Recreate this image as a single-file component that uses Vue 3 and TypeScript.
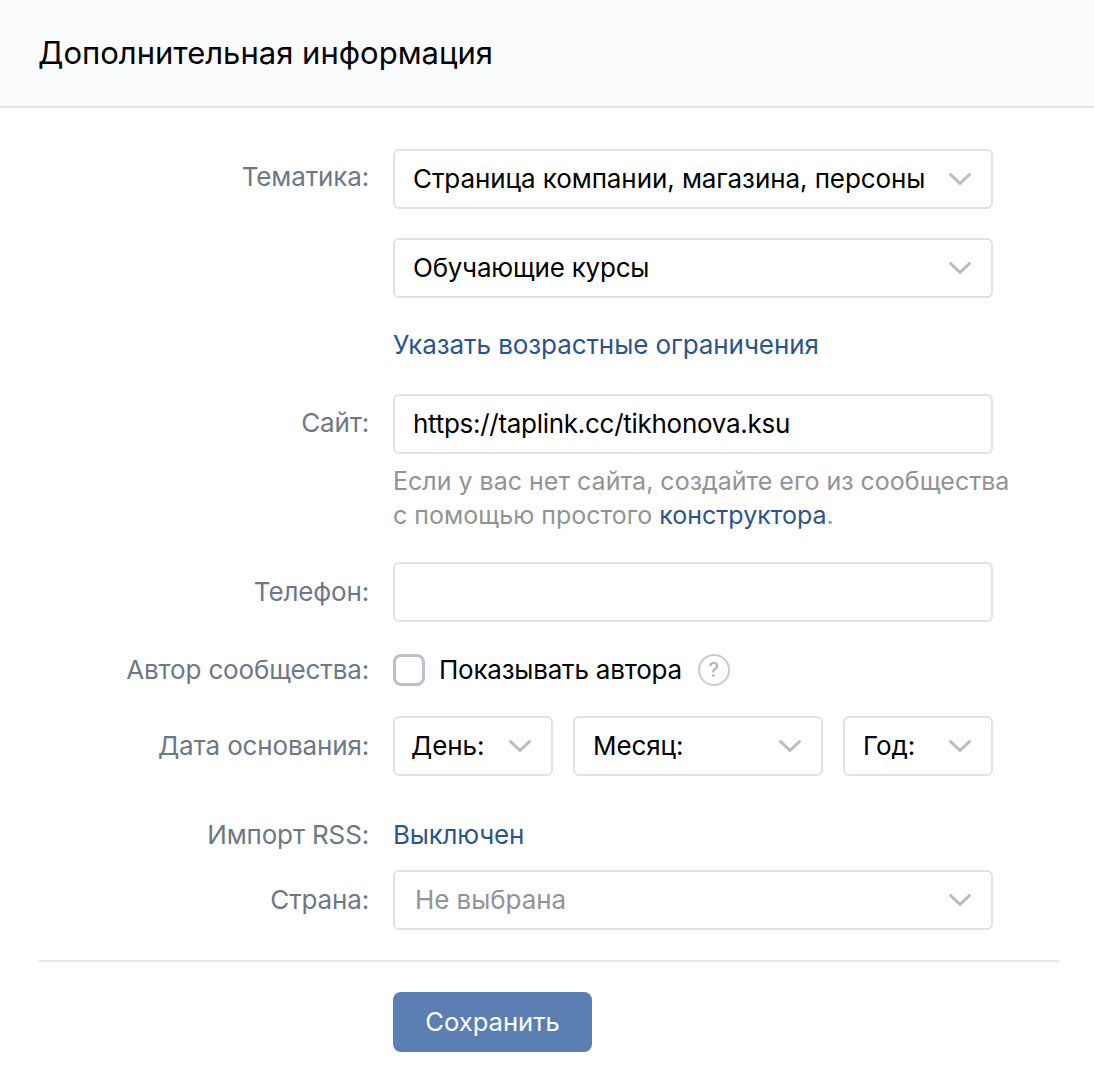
<template>
  <div class="page">
    <div class="header">Дополнительная информация</div>

    <form class="form" @submit.prevent>
      <div class="row row-topic">
        <div class="label">Тематика:</div>
        <div class="field stack">
          <div class="select"><span>Страница компании, магазина, персоны</span><svg class="chev" viewBox="0 0 22 12"><path d="M1.5 1.5L11 10.5l9.5-9" /></svg></div>
          <div class="select"><span class="tight">Обучающие курсы</span><svg class="chev" viewBox="0 0 22 12"><path d="M1.5 1.5L11 10.5l9.5-9" /></svg></div>
        </div>
      </div>

      <div class="row row-age">
        <div class="label"></div>
        <a class="link">Указать возрастные ограничения</a>
      </div>

      <div class="row row-site">
        <div class="label">Сайт:</div>
        <div class="field">
          <div class="select url">https://taplink.cc/tikhonova.ksu</div>
          <p class="hint">Если у вас нет сайта, создайте его из сообщества<br />с помощью простого <a class="link">конструктора</a>.</p>
        </div>
      </div>

      <div class="row row-phone">
        <div class="label">Телефон:</div>
        <div class="select field"></div>
      </div>

      <div class="row row-author">
        <div class="label">Автор сообщества:</div>
        <div class="check-wrap">
          <span class="checkbox"></span>
          <span class="tight">Показывать автора</span>
          <span class="help">?</span>
        </div>
      </div>

      <div class="row row-date">
        <div class="label">Дата основания:</div>
        <div class="date">
          <div v-for="d in dateParts" :key="d.text" class="select" :class="d.cls"><span>{{ d.text }}</span><svg class="chev" viewBox="0 0 22 12"><path d="M1.5 1.5L11 10.5l9.5-9" /></svg></div>
        </div>
      </div>

      <div class="row row-rss">
        <div class="label">Импорт RSS:</div>
        <a class="link tight">Выключен</a>
      </div>

      <div class="row row-country">
        <div class="label">Страна:</div>
        <div class="select field placeholder"><span>Не выбрана</span><svg class="chev" viewBox="0 0 22 12"><path d="M1.5 1.5L11 10.5l9.5-9" /></svg></div>
      </div>

      <div class="divider"></div>

      <div class="row">
        <div class="label"></div>
        <button class="save" type="button">Сохранить</button>
      </div>
    </form>
  </div>
</template>

<script setup lang="ts">
const dateParts = [
  { text: 'День:', cls: 'day' },
  { text: 'Месяц:', cls: 'month' },
  { text: 'Год:', cls: 'year' }
]
</script>

<style>
html, body {
  background: #fff;
}
</style>

<style scoped>
.page {
  width: 1094px;
  height: 1090px;
  font-family: Inter, "Noto Sans", sans-serif;
  font-size: 26px;
  letter-spacing: -0.08px;
  line-height: 34px;
  color: #000;
  background: #fff;
  overflow: hidden;
}

.header {
  height: 106px;
  padding: 0 38px;
  display: flex;
  align-items: center;
  font-size: 31px;
  letter-spacing: 0;
  background: #fafbfc;
  border-bottom: 2px solid #e1e3e6;
}

.form {
  padding-top: 41px;
}

.row {
  display: flex;
  align-items: center;
}

.row-topic {
  align-items: flex-start;
}

.row-topic .label {
  height: 60px;
  line-height: 56px;
}

.row-age {
  margin-top: 30px;
}

.row-site {
  margin-top: 32px;
  align-items: flex-start;
}

.row-site .label {
  height: 60px;
  line-height: 58px;
}

.row-phone {
  margin-top: 30px;
}

.row-author {
  margin-top: 31px;
}

.row-date {
  margin-top: 29px;
}

.row-rss {
  margin-top: 42px;
}

.row-country {
  margin-top: 18px;
}

.label {
  width: 369px;
  flex: none;
  margin-right: 24px;
  text-align: right;
  color: #6d7885;
  letter-spacing: -0.15px;
}

.field {
  width: 600px;
}

.stack {
  display: flex;
  flex-direction: column;
  gap: 29px;
}

.select {
  box-sizing: border-box;
  height: 60px;
  display: flex;
  align-items: center;
  justify-content: space-between;
  padding: 0 20px 0 18px;
  border: 2px solid #dfe2e7;
  border-radius: 6px;
  background: #fff;
}

.tight {
  letter-spacing: -0.22px;
}

.url {
  letter-spacing: -0.28px;
}

.chev {
  width: 22px;
  height: 12px;
  flex: none;
}

.chev path {
  fill: none;
  stroke: #b8bcc4;
  stroke-width: 3;
  stroke-linecap: round;
  stroke-linejoin: round;
}

.link {
  color: #2c5587;
  text-decoration: none;
}

.hint {
  margin: 10px 0 0;
  color: #939393;
  font-size: 25px;
  letter-spacing: 0;
  white-space: nowrap;
}

.check-wrap {
  display: flex;
  align-items: center;
}

.checkbox {
  box-sizing: border-box;
  width: 32px;
  height: 32px;
  margin-right: 14px;
  border: 3px solid #b8c1cc;
  border-radius: 8px;
}

.help {
  box-sizing: border-box;
  width: 32px;
  height: 32px;
  margin-left: 16px;
  display: flex;
  align-items: center;
  justify-content: center;
  border: 2px solid #c4ccd6;
  border-radius: 50%;
  color: #aeb7c2;
  font-size: 20px;
  font-weight: 500;
  line-height: 1;
}

.date {
  display: flex;
  gap: 20px;
}

.day {
  width: 160px;
  padding-left: 16px;
}

.month {
  width: 250px;
}

.year {
  width: 150px;
}

.placeholder {
  color: #939393;
  padding-left: 20px;
}

.divider {
  height: 2px;
  margin: 30px 35px 30px 39px;
  background: #e7e8ec;
}

.save {
  width: 199px;
  height: 60px;
  padding: 0;
  border: 0;
  border-radius: 8px;
  background: #5b7fb3;
  color: #fff;
  font: inherit;
  font-size: 25.6px;
}
</style>
